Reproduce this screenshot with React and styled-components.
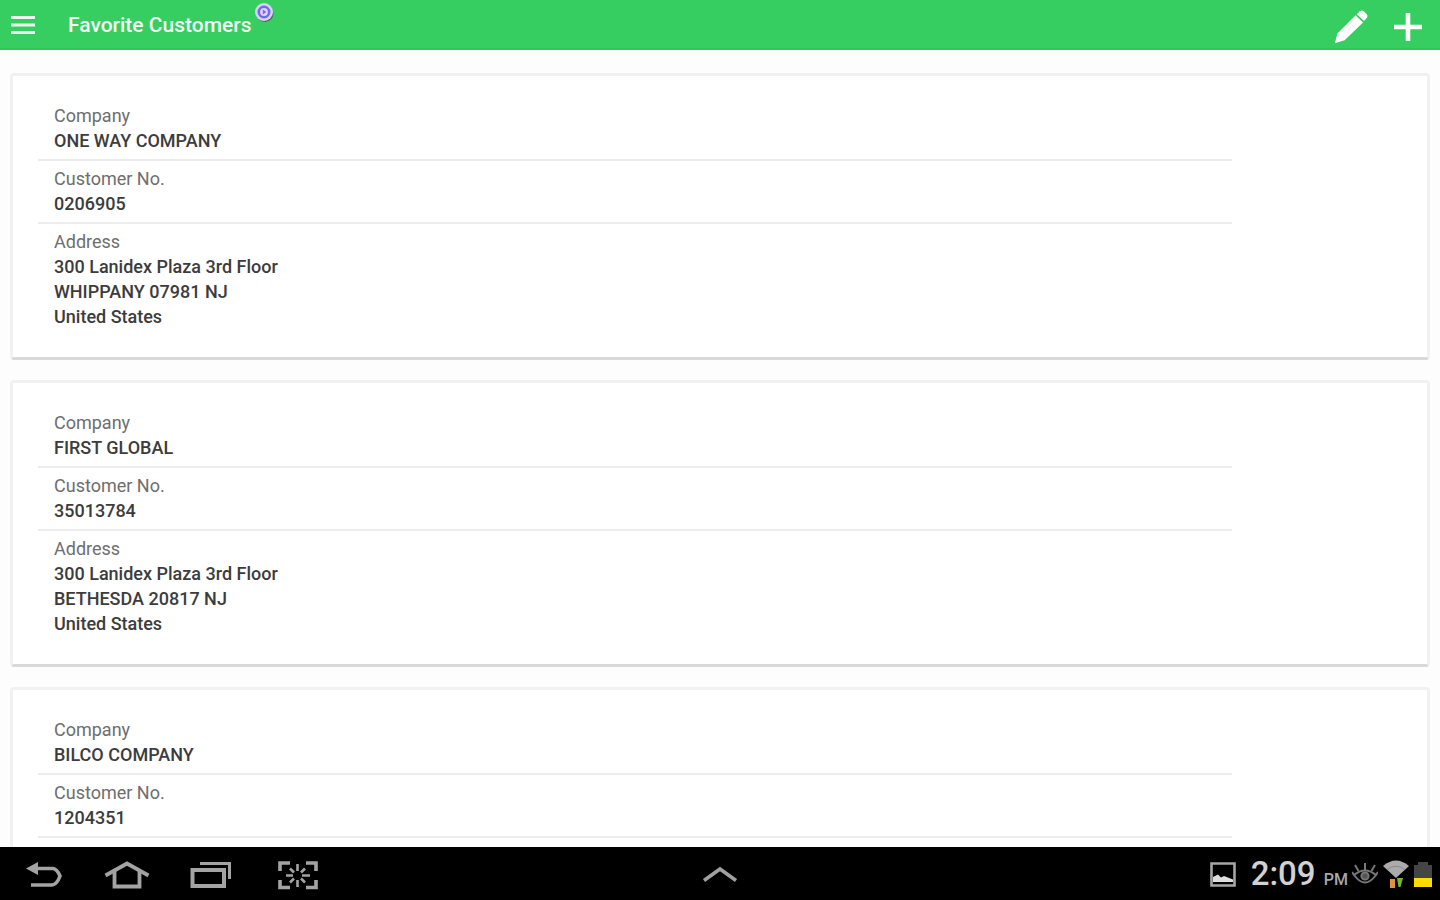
import React from 'react'
import styled, { createGlobalStyle } from 'styled-components';

const customers = [
  {
    company: 'ONE WAY COMPANY',
    number: '0206905',
    address: ['300 Lanidex Plaza 3rd Floor', 'WHIPPANY 07981 NJ', 'United States'],
  },
  {
    company: 'FIRST GLOBAL',
    number: '35013784',
    address: ['300 Lanidex Plaza 3rd Floor', 'BETHESDA 20817 NJ', 'United States'],
  },
  {
    company: 'BILCO COMPANY',
    number: '1204351',
  },
];

const CustomerCard = ({ customer }) => (
  <Card>
    <Fields>
      <Field $divided>
        <Label>Company</Label>
        <Value>{customer.company}</Value>
      </Field>
      <Field $divided>
        <Label>Customer No.</Label>
        <Value>{customer.number}</Value>
      </Field>
      {customer.address && (
        <Field>
          <Label>Address</Label>
          {customer.address.map((line) => (
            <Value key={line}>{line}</Value>
          ))}
        </Field>
      )}
    </Fields>
  </Card>
);

const App = () => {
  return (
    <Screen>
      <GlobalStyle />
      <Header>
        <IconButton aria-label="Menu">
          <svg width="24" height="20" viewBox="0 0 24 20" stroke="#e9faee" strokeWidth="3">
            <path d="M0 2.5H24M0 10H24M0 17.5H24" />
          </svg>
        </IconButton>
        <Title>
          Favorite Customers
          <Badge>
            <svg width="22" height="22" viewBox="0 0 22 22">
              <circle cx="12" cy="12.5" r="8.5" fill="#4b6b58" />
              <circle cx="11" cy="11" r="9" fill="#d3d5f3" />
              <circle cx="11" cy="11" r="5.2" fill="#dcd5ff" stroke="#7a66ee" strokeWidth="2.6" />
              <path d="M9.8 8.6v4.8l3.6-2.4z" fill="#7a66ee" />
            </svg>
          </Badge>
        </Title>
        <Actions>
          <IconButton aria-label="Edit">
            <svg width="34" height="34" viewBox="0 0 34 34" fill="#fff">
              <path d="M.8 33.2 3.4 23.4 21.6 5.2 29 12.4 10.6 30.2z" />
              <path d="M22.8 4.2 26 1.2Q28 -.2 30 1.4L32.6 4Q34.2 6 32.7 8L30 11z" />
            </svg>
          </IconButton>
          <IconButton aria-label="Add">
            <svg width="28" height="28" viewBox="0 0 28 28" stroke="#fff" strokeWidth="4.6">
              <path d="M14 0V28M0 14H28" />
            </svg>
          </IconButton>
        </Actions>
      </Header>

      <List>
        {customers.map((customer) => (
          <CustomerCard key={customer.number} customer={customer} />
        ))}
      </List>

      <SystemBar>
        <NavKeys>
          <IconButton aria-label="Back">
            <svg width="38" height="30" viewBox="0 0 38 30" fill="none" stroke="#a3a3a3" strokeWidth="3.6">
              <path d="M8 8.5H27Q31 9 34 16Q31 24.5 26 25H5" />
              <path d="M0 8.5 12 2V15z" fill="#a3a3a3" stroke="none" />
            </svg>
          </IconButton>
          <IconButton aria-label="Home">
            <svg width="46" height="30" viewBox="0 0 46 30" fill="none" stroke="#a3a3a3" strokeWidth="3.8">
              <path d="M1.5 15.5 23 3.5 44.5 15.5" />
              <path d="M10.5 11V26.5H35.5V11" />
            </svg>
          </IconButton>
          <IconButton aria-label="Recent apps">
            <svg width="42" height="30" viewBox="0 0 42 30" fill="none" stroke="#a3a3a3" strokeWidth="4">
              <path d="M2.5 10H34V26H2.5z" />
              <path d="M10 3.5H39.5V19" strokeWidth="3" />
            </svg>
          </IconButton>
          <IconButton aria-label="Capture screen">
            <svg width="46" height="30" viewBox="-6 0 46 30" fill="none" stroke="#a3a3a3" strokeWidth="3.6">
              <path d="M2 11V3H12M28 3H38V11M38 20V27.5H28M12 27.5H2V20" />
              <path
                d="M19.5 4V11M19.5 20V27M8 15.5H15M24 15.5H32M12 8.5 16 12.5M27 8.5 23 12.5M12 22.5 16 18.5M27 22.5 23 18.5"
                strokeWidth="2.6"
              />
            </svg>
          </IconButton>
        </NavKeys>
        <IconButton aria-label="Open tray">
          <svg width="36" height="18" viewBox="0 0 36 18" fill="none" stroke="#a0a0a0" strokeWidth="3.6">
            <path d="M2 14.5 18 3 34 14.5" />
          </svg>
        </IconButton>
        <Status>
          <svg width="26" height="26" viewBox="0 0 26 26">
            <path d="M1.5 1.5H24.5V23.5H1.5z" fill="none" stroke="#a6a6a6" strokeWidth="2.6" />
            <path d="M3 20V15L8 12.5 11 15.5 14 14 23 17.5V20z" fill="#dedede" />
          </svg>
          <Clock>
            2:09 <Meridiem>PM</Meridiem>
          </Clock>
          <StatusIcons>
            <svg width="26" height="24" viewBox="0 0 26 24" fill="none" stroke="#777" strokeWidth="2">
              <path d="M2 12Q13 3 24 12Q13 27 2 12z" />
              <circle cx="13" cy="13" r="3.6" fill="#555" />
              <path d="M13 7V0M6.5 8 3 2M19.5 8 23 2M2 12 0 9M24 12 26 9" />
            </svg>
            <svg width="26" height="30" viewBox="0 0 26 30">
              <path d="M0 6Q13-5 26 6L13 18z" fill="#ababab" />
              <path d="M4 9.5Q13 3 22 9.5" fill="none" stroke="#8a8a8a" />
              <path d="M7 19H12V28H7z" fill="#e2913b" />
              <path d="M14 18H20L17.5 27H15.5z" fill="#72ba28" />
            </svg>
            <svg width="18" height="26" viewBox="0 0 18 26">
              <path d="M0 3H4V0H14V3H18V16H0z" fill="#454545" />
              <path d="M0 16H18V25H0z" fill="#ffdc00" />
            </svg>
          </StatusIcons>
        </Status>
      </SystemBar>
    </Screen>
  )
}

const GlobalStyle = createGlobalStyle`
  * {
    box-sizing: border-box;
  }

  body {
    margin: 0;
    background: #fdfdfd;
    font-family: Roboto, 'Liberation Sans', sans-serif;
  }
`;

const Screen = styled.div`
  display: flex;
  flex-direction: column;
  height: 100vh;
  overflow: hidden;
`;

const Header = styled.header`
  display: flex;
  flex: none;
  align-items: center;
  height: 50px;
  padding: 2px 18px 0 11px;
  background: #36ce60;
  border-bottom: 2px solid #2fc756;
`;

const IconButton = styled.button`
  display: flex;
  padding: 0;
  border: 0;
  background: none;
  cursor: pointer;
`;

const Title = styled.h1`
  position: relative;
  margin: 0 0 0 33px;
  color: #f1fcf4;
  font-size: 21px;
  font-weight: 500;
  line-height: 24px;
`;

const Badge = styled.span`
  position: absolute;
  top: -12px;
  right: -24px;
  display: flex;
`;

const Actions = styled.div`
  display: flex;
  align-items: center;
  gap: 26px;
  margin-left: auto;
  padding-top: 4px;
`;

const List = styled.main`
  display: flex;
  flex: 1;
  flex-direction: column;
  gap: 20px;
  min-height: 0;
  padding: 23px 10px 0;
  overflow: hidden;
`;

const Card = styled.section`
  flex: none;
  padding: 22px 25px 27px;
  background: #fff;
  border: 3px solid #f1f1f1;
  border-bottom-color: #d9d9d9;
  border-radius: 4px;
`;

const Fields = styled.dl`
  width: 87.5%;
  margin: 0;
`;

const Field = styled.div`
  padding: ${({ $divided }) => ($divided ? '5px 16px 6px' : '5px 16px 1px')};
  border-bottom: ${({ $divided }) => ($divided ? '2px solid #ececec' : '0')};
`;

const Label = styled.dt`
  color: #6e6e6e;
  font-size: 18px;
  line-height: 25px;
`;

const Value = styled.dd`
  margin: 0;
  color: #3c3c3c;
  font-size: 18px;
  font-weight: 500;
  line-height: 25px;
`;

const SystemBar = styled.footer`
  display: grid;
  flex: none;
  grid-template-columns: 1fr auto 1fr;
  align-items: center;
  height: 53px;
  padding: 2px 8px 0;
  background: #000;
`;

const NavKeys = styled.nav`
  display: flex;
  align-items: center;
  gap: 40px;
  padding-left: 18px;
`;

const Status = styled.div`
  display: flex;
  align-items: center;
  justify-content: flex-end;
`;

const Clock = styled.div`
  margin: 4px 4px 0 15px;
  color: #d2d2d2;
  font-size: 33px;
  font-weight: 500;
  line-height: 40px;
`;

const Meridiem = styled.span`
  color: #a8a8a8;
  font-size: 16px;
`;

const StatusIcons = styled.div`
  display: flex;
  align-items: center;
  gap: 5px;
`;

export default App
